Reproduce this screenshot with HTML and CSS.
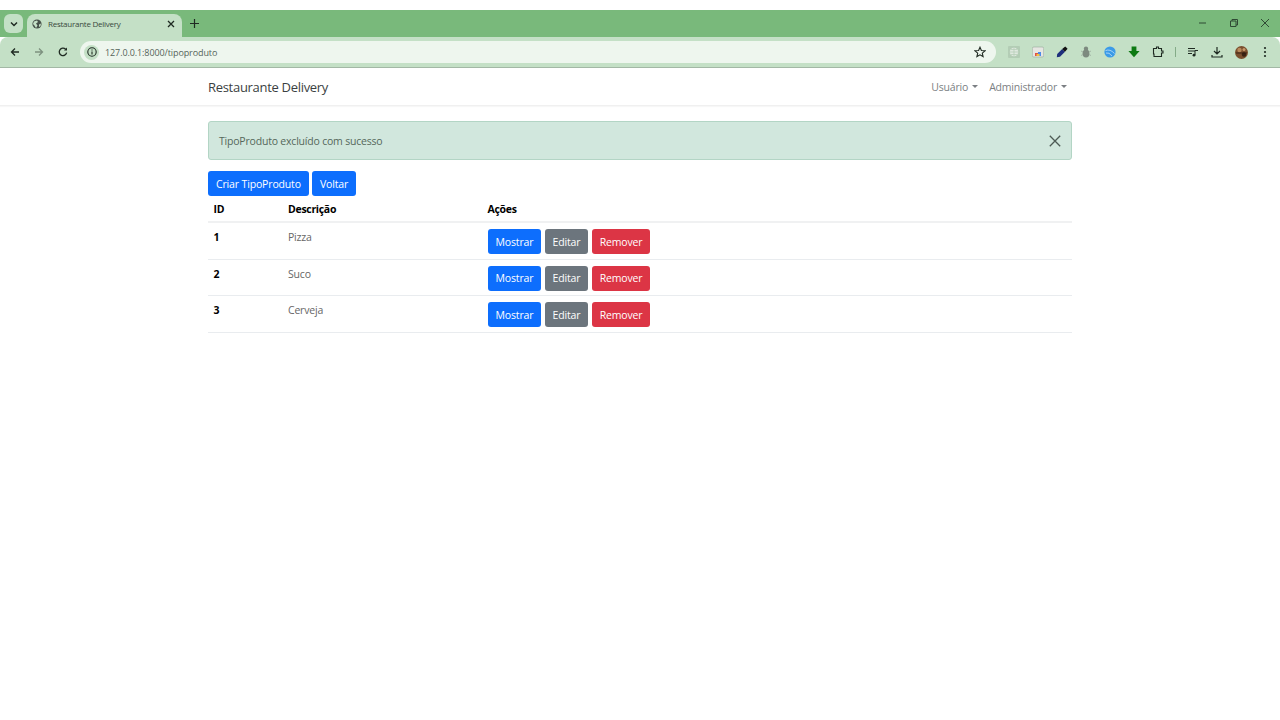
FILE: index.html
```html
<!DOCTYPE html>
<html lang="pt-BR">
<head>
<meta charset="utf-8">
<title>Restaurante Delivery</title>
<link rel="stylesheet" href="styles.css">
</head>
<body>
<div class="topgap"></div>
<div class="tabstrip">
  <div class="tabsearch"><svg width="10" height="10" viewBox="0 0 10 10"><path d="M2 3.5 5 6.5 8 3.5" fill="none" stroke="#1f2a22" stroke-width="1.5"/></svg></div>
  <div class="tab">
    <svg class="globe" width="10" height="10" viewBox="0 0 10 10"><circle cx="5" cy="5" r="4.6" fill="#47524a"/><path d="M2 2.5 5 1.5 6 3 4 4.5 5.5 6.5 4 9 2.5 6.5 1 5ZM7 5.5 9 4.5 8.5 7 7 8Z" fill="#c4e0c6"/></svg>
    <span class="tabtitle">Restaurante Delivery</span>
    <svg class="tabclose" width="8" height="8" viewBox="0 0 8 8"><path d="M1 1 7 7M7 1 1 7" stroke="#1f2a22" stroke-width="1.3"/></svg>
  </div>
  <svg class="newtab" width="9" height="9" viewBox="0 0 9 9"><path d="M4.5 0V9M0 4.5H9" stroke="#1f2a22" stroke-width="1.2"/></svg>
  <div class="winctl">
    <svg width="10" height="10" viewBox="0 0 10 10"><path d="M1 5H8" stroke="#2f4a34" stroke-width="1"/></svg>
    <svg width="10" height="10" viewBox="0 0 10 10"><path d="M1.5 3H7V8.5H1.5ZM3 3V1.5H8.5V7H7" fill="none" stroke="#2f4a34" stroke-width="1"/></svg>
    <svg width="10" height="10" viewBox="0 0 10 10"><path d="M1 1 9 9M9 1 1 9" stroke="#2f4a34" stroke-width="1"/></svg>
  </div>
</div>
<div class="toolbar">
  <svg class="navicon" width="10" height="10" viewBox="0 0 10 10"><path d="M9 5H1.5M5 1.5 1.5 5 5 8.5" fill="none" stroke="#1f2a22" stroke-width="1.3"/></svg>
  <svg class="navicon" width="10" height="10" viewBox="0 0 10 10"><path d="M1 5H8.5M5 1.5 8.5 5 5 8.5" fill="none" stroke="#7d917f" stroke-width="1.3"/></svg>
  <svg class="navicon" width="10" height="10" viewBox="0 0 10 10"><path d="M8.6 5.6A3.7 3.7 0 1 1 7.6 2.3" fill="none" stroke="#1f2a22" stroke-width="1.3"/><path d="M9 .6V3.6H6Z" fill="#1f2a22"/></svg>
  <div class="omnibox">
    <div class="siteinfo"><svg width="10" height="10" viewBox="0 0 10 10"><circle cx="5" cy="5" r="4.2" fill="none" stroke="#1f2a22" stroke-width="1.1"/><path d="M5 4.4V7.4M5 2.5V3.6" stroke="#1f2a22" stroke-width="1.1"/></svg></div>
    <span class="url">127.0.0.1:8000/tipoproduto</span>
    <svg class="star" width="12" height="12" viewBox="0 0 12 12"><path d="M6 1.2 7.4 4.5 11 4.8 8.3 7.1 9.1 10.6 6 8.8 2.9 10.6 3.7 7.1 1 4.8 4.6 4.5Z" fill="none" stroke="#1f2a22" stroke-width="1.1"/></svg>
  </div>
  <div class="exts">
    <svg width="12" height="12" viewBox="0 0 12 12"><rect width="12" height="12" rx="1" fill="#b3cdb5"/><circle cx="6" cy="6" r="4.2" fill="#dfe9df"/><path d="M2 6H10M6 2V10M3 3.5H9M3 8.5H9" stroke="#b3cdb5" stroke-width=".7"/></svg>
    <svg width="12" height="12" viewBox="0 0 12 12"><rect x=".3" y="1" width="11.4" height="10" rx="1.5" fill="#e6e6e2" stroke="#98a79a" stroke-width=".6"/><path d="M3 10V7H6V10Z" fill="#de5246"/><path d="M6 10V6H9V10Z" fill="#4b8be8"/><path d="M4.5 10V8H7.5V10Z" fill="#f2c23f"/></svg>
    <svg width="12" height="12" viewBox="0 0 12 12"><path d="M.8 11.2 1.2 8 6.2 3 9 5.8 4 10.8Z" fill="#1e2f7c"/><path d="M6.2 3 9.2.4 11.6 2.8 9 5.8Z" fill="#111"/></svg>
    <svg width="12" height="12" viewBox="0 0 12 12"><circle cx="6" cy="2.8" r="2.2" fill="#7d8a7f"/><ellipse cx="6" cy="7.5" rx="3.4" ry="4" fill="#7d8a7f"/><path d="M1 5 3 6M11 5 9 6M1 9.5 3 8.5M11 9.5 9 8.5" stroke="#9aaa9c" stroke-width=".8"/></svg>
    <svg width="12" height="12" viewBox="0 0 12 12"><circle cx="6" cy="6" r="5.6" fill="#3b9be8"/><path d="M1.5 4.6Q6 2.6 10.5 7.5M2 7Q5 6 8 10" stroke="#bfe0f8" stroke-width=".8" fill="none"/></svg>
    <svg width="12" height="12" viewBox="0 0 12 12"><path d="M3.6 .6H8.4V5H11.6L6 11.2 .4 5H3.6Z" fill="#0d7a12"/></svg>
    <svg width="12" height="12" viewBox="0 0 12 12"><path d="M1.5 2.5H4.5V1H6.5V2.5H9.5V5H11V7H9.5V10.5H2V8H1.5Z" fill="none" stroke="#1f2a22" stroke-width="1.1"/></svg>
    <span class="sep"></span>
    <svg width="12" height="12" viewBox="0 0 12 12"><path d="M1 2.5H8M1 5H8M1 7.5H5" stroke="#1f2a22" stroke-width="1.1"/><path d="M8 9V4.5H11" fill="none" stroke="#1f2a22" stroke-width="1"/><circle cx="7" cy="9.2" r="1.4" fill="#1f2a22"/></svg>
    <svg width="12" height="12" viewBox="0 0 12 12"><path d="M6 1V7.5M3 5 6 8 9 5M1 9V11H11V9" fill="none" stroke="#1f2a22" stroke-width="1.2"/></svg>
    <svg width="13" height="13" viewBox="0 0 13 13"><circle cx="6.5" cy="6.5" r="6.5" fill="#7a4f2e"/><circle cx="4.5" cy="4" r="2.2" fill="#b98a5c"/><circle cx="9" cy="8.5" r="2.2" fill="#3a2314"/><circle cx="9" cy="3.5" r="1.5" fill="#c79a6b"/><path d="M1 7H12" stroke="#2e1b0f" stroke-width=".8"/></svg>
    <svg class="kebab" width="4" height="12" viewBox="0 0 4 12"><circle cx="2" cy="2" r="1.1" fill="#1f2a22"/><circle cx="2" cy="6" r="1.1" fill="#1f2a22"/><circle cx="2" cy="10" r="1.1" fill="#1f2a22"/></svg>
  </div>
</div>
<nav class="navbar">
  <div class="nav-inner">
    <a class="brand">Restaurante Delivery</a>
    <div class="navlinks">
      <a class="navlink">Usuário <i class="caret"></i></a>
      <a class="navlink">Administrador <i class="caret"></i></a>
    </div>
  </div>
</nav>
<main class="container">
  <div class="alert">
    <span>TipoProduto excluído com sucesso</span>
    <svg width="12" height="12" viewBox="0 0 12 12"><path d="M.8.8 11.2 11.2M11.2.8.8 11.2" stroke="#4d5a54" stroke-width="1.3"/></svg>
  </div>
  <div class="actions">
    <a class="btn blue">Criar TipoProduto</a>
    <a class="btn blue">Voltar</a>
  </div>
  <table class="table">
    <thead>
      <tr><th class="c1">ID</th><th class="c2">Descrição</th><th>Ações</th></tr>
    </thead>
    <tbody>
      <tr><th>1</th><td>Pizza</td><td><div class="rowbtns"><a class="btn blue">Mostrar</a><a class="btn gray">Editar</a><a class="btn red">Remover</a></div></td></tr>
      <tr><th>2</th><td>Suco</td><td><div class="rowbtns"><a class="btn blue">Mostrar</a><a class="btn gray">Editar</a><a class="btn red">Remover</a></div></td></tr>
      <tr><th>3</th><td>Cerveja</td><td><div class="rowbtns"><a class="btn blue">Mostrar</a><a class="btn gray">Editar</a><a class="btn red">Remover</a></div></td></tr>
    </tbody>
  </table>
</main>
</body>
</html>
```
FILE: styles.css
```css
* { box-sizing: border-box; }
html, body { margin: 0; padding: 0; background: #fff; }
body { font-family: "Open Sans", "Noto Sans", sans-serif; font-size: 10.5px; letter-spacing: -.2px; color: #212529; width: 1280px; height: 720px; overflow: hidden; }
svg { display: block; flex: none; }
.topgap { height: 10px; background: #fff; }
.tabstrip { height: 27px; background: #79b97b; display: flex; align-items: flex-end; padding-left: 4px; }
.tabsearch { width: 19px; height: 19px; margin-bottom: 4px; background: #c4e0c6; border-radius: 6px; display: flex; align-items: center; justify-content: center; }
.tab { width: 155px; height: 23px; margin-left: 4px; background: #c4e0c6; border-radius: 8px 8px 0 0; display: flex; align-items: center; padding: 0 7px 3px 5px; }
.tabtitle { margin: 0 0 1px 6px; font-size: 8px; letter-spacing: -.25px; color: #3a4a3d; flex: 1; white-space: nowrap; }
.newtab { margin: 0 0 9px 8px; }
.winctl { margin-left: auto; display: flex; gap: 21px; padding-right: 10px; margin-bottom: 9px; }
.toolbar { height: 31px; background: #c4e0c6; border-bottom: 1px solid #a3b8a5; display: flex; align-items: center; padding: 0 10px; border-radius: 8px 8px 0 0; }
.navicon { margin-right: 14px; }
.omnibox { margin-left: -2px; width: 916px; height: 22px; background: #eef6ee; border-radius: 11px; display: flex; align-items: center; padding: 0 10px 0 4px; }
.siteinfo { width: 15px; height: 15px; border-radius: 50%; background: #c4e0c6; display: flex; align-items: center; justify-content: center; }
.url { margin-left: 6px; font-size: 9px; letter-spacing: -.1px; color: #55645a; flex: 1; }
.exts { display: flex; align-items: center; gap: 12px; margin-left: 11.5px; }
.sep { width: 1px; height: 10px; background: #84ab87; margin: 0 -1px; }
.kebab { margin-left: 3px; }
.navbar { height: 38px; background: #fff; border-bottom: 1px solid #f0f0f0; box-shadow: 0 1px 1px rgba(0,0,0,.03); }
.nav-inner { width: 864px; height: 100%; margin: 0 auto; display: flex; align-items: center; justify-content: space-between; }
.brand { font-size: 13px; letter-spacing: -.3px; color: #3b3f42; }
.navlinks { display: flex; gap: 11px; padding-right: 5px; }
.navlink { font-size: 10.5px; color: #7b7f83; display: flex; align-items: center; gap: 4px; }
.caret { width: 0; height: 0; border-top: 3px solid #7b7f83; border-left: 3px solid transparent; border-right: 3px solid transparent; }
.container { width: 864px; margin: 15px auto 0; }
.alert { height: 39px; background: #d1e7dd; border: 1px solid #b3d5c5; border-radius: 3px; display: flex; align-items: center; justify-content: space-between; padding: 0 10px; font-size: 10.5px; color: #55675b; }
.actions { display: flex; gap: 3px; margin-top: 11px; }
.btn { height: 25px; padding: 0 8px; border-radius: 3px; display: flex; align-items: center; color: #fff; font-size: 10.5px; letter-spacing: -.15px; white-space: nowrap; }
.blue { background: #0d6efd; }
.gray { background: #6c757d; }
.red { background: #dc3545; }
.table { width: 100%; border-collapse: collapse; margin-top: .5px; table-layout: fixed; }
.table th, .table td { text-align: left; vertical-align: top; padding: 6px 5.5px 4.5px; border-bottom: 1px solid #e9ecef; font-size: 10.5px; line-height: 16px; }
.table th { color: #000; font-weight: 700; }
.table thead th { padding: 4.5px 5.5px 4px; height: 25px; border-bottom: 2px solid #f0f1f2; letter-spacing: -.3px; }
.table td { color: #666; }
.c1 { width: 74.5px; }
.c2 { width: 199.5px; }
.rowbtns { display: flex; gap: 3.2px; }
```
